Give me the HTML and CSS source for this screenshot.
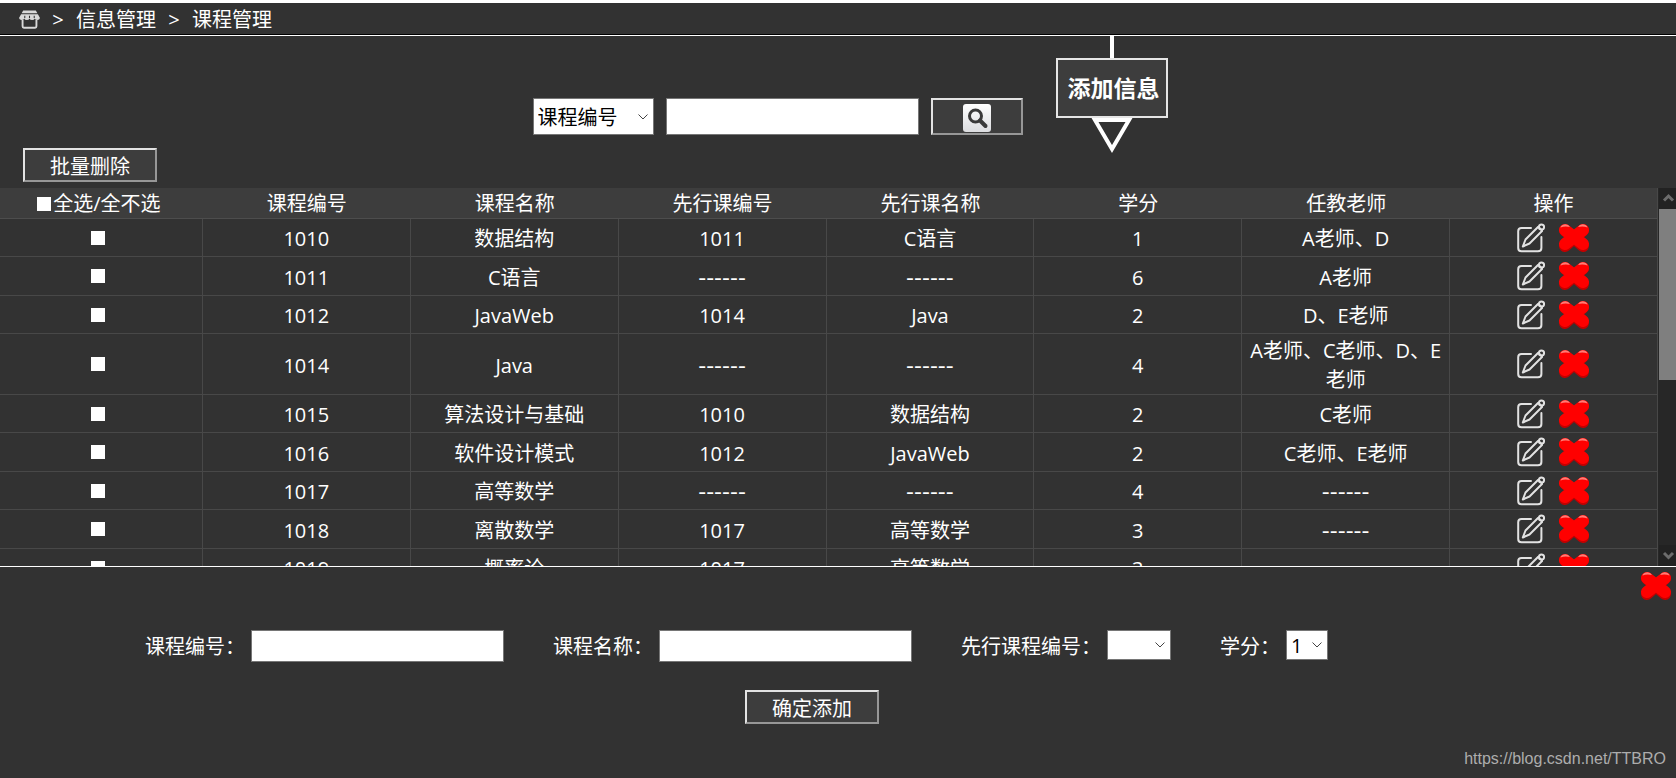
FILE: index.html
```html
<!DOCTYPE html>
<html lang="zh-CN">
<head>
<meta charset="utf-8">
<meta name="viewport" content="width=device-width, initial-scale=1">
<title>课程管理</title>
<link rel="stylesheet" href="styles.css">
</head>
<body>
<svg class="sprite" aria-hidden="true">
  <defs>
    <linearGradient id="tile" x1="0" y1="0" x2="0" y2="1">
      <stop offset="0" stop-color="#ffffff"/>
      <stop offset="1" stop-color="#dcdde0"/>
    </linearGradient>
  </defs>
  <symbol id="cross" viewBox="0 0 32 30">
    <g fill="none" stroke-linecap="round" stroke-width="12">
      <path stroke="#c40000" d="M7 7.500L25 23M25 7.500L7 23"/>
      <path stroke="#ff0000" d="M7 7L25 21M25 7L7 21"/>
    </g>
    <path fill="#ff7d76" d="M2.300 4.500Q4 1.300 7.500 1.300Q10.500 1.500 12 4Q7 2.800 2.300 4.500ZM20 4Q21.500 1.500 24.500 1.300Q28 1.300 29.700 4.500Q25 2.800 20 4Z"/>
  </symbol>
  <symbol id="edit" viewBox="0 0 28 30">
    <g fill="none" stroke="#e2e2e2" stroke-width="2" stroke-linecap="round" stroke-linejoin="round">
      <path d="M14 5H4.500Q1.200 5 1.200 8.300V25Q1.200 28.300 4.500 28.300H21Q24.400 28.300 24.400 25V14"/>
      <path d="M21 4L8.500 16.500L5.800 23.500L12.500 20.500L25 8"/>
      <path d="M21.500 4L25 7.500"/>
      <circle cx="24.500" cy="4" r="2.600"/>
    </g>
  </symbol>
</svg>

<nav class="crumbs" aria-label="位置">
  <a href="#" aria-label="首页"><svg class="home" viewBox="0 0 20 18">
    <path fill="#d8d8d8" d="M4 .5H16L17.500 3H2.500ZM2 4H18L20 7.500Q19.500 9.500 17.500 9.500Q15.500 9.500 15 8Q14.500 9.500 12.500 9.500Q10.500 9.500 10 8Q9.500 9.500 7.500 9.500Q5.500 9.500 5 8Q4.500 9.500 2.500 9.500Q.5 9.500 0 7.500Z"/>
    <path fill="#323232" d="M5 5.500h1v2H5zM9.500 5.500h1v2h-1zM14 5.500h1v2h-1z"/>
    <path fill="none" stroke="#d8d8d8" stroke-width="1.800" d="M3.400 9.500V15.500Q3.400 16.800 4.700 16.800H15.300Q16.600 16.800 16.600 15.500V9.500"/>
  </svg></a>
  <span class="sep">&gt;</span>
  <a href="#">信息管理</a>
  <span class="sep">&gt;</span>
  <a href="#">课程管理</a>
</nav>

<section class="toolbar">
  <form class="search">
    <select class="field key" aria-label="查询条件"><option>课程编号</option><option>课程名称</option></select>
    <input class="field text" type="text" aria-label="查询内容">
    <button class="btn go" type="button" aria-label="查询"><svg class="lens" viewBox="0 0 28 28">
      <rect width="28" height="28" rx="3" fill="url(#tile)"/>
      <circle cx="12.500" cy="12" r="6" fill="none" stroke="#3a3a3a" stroke-width="3"/>
      <path d="M17 16.500L22.500 22" stroke="#3a3a3a" stroke-width="4" stroke-linecap="round"/>
    </svg></button>
    <button class="sign" type="button">
      <span class="stem"></span>
      <span class="board">添加信息</span>
      <svg class="tip" viewBox="0 0 42 35"><path d="M4 2H38L21 31Z" fill="#323232" stroke="#fff" stroke-width="4"/></svg>
    </button>
  </form>
  <button class="btn wide" type="button">批量删除</button>
</section>

<main class="list">
  <div class="view">
    <table class="grid">
      <thead>
        <tr><th><label class="all"><input class="tick" type="checkbox">全选/全不选</label></th><th>课程编号</th><th>课程名称</th><th>先行课编号</th><th>先行课名称</th><th>学分</th><th>任教老师</th><th>操作</th></tr>
      </thead>
      <tbody>
        <tr><td><input class="tick" type="checkbox" aria-label="选择 1010"></td><td>1010</td><td>数据结构</td><td>1011</td><td>C语言</td><td>1</td><td>A老师、D</td><td><div class="ops"><button class="icon" type="button" aria-label="编辑"><svg class="pen"><use href="#edit"/></svg></button><button class="icon" type="button" aria-label="删除"><svg class="cross"><use href="#cross"/></svg></button></div></td></tr>
        <tr><td><input class="tick" type="checkbox" aria-label="选择 1011"></td><td>1011</td><td>C语言</td><td class="none">------</td><td class="none">------</td><td>6</td><td>A老师</td><td><div class="ops"><button class="icon" type="button" aria-label="编辑"><svg class="pen"><use href="#edit"/></svg></button><button class="icon" type="button" aria-label="删除"><svg class="cross"><use href="#cross"/></svg></button></div></td></tr>
        <tr><td><input class="tick" type="checkbox" aria-label="选择 1012"></td><td>1012</td><td>JavaWeb</td><td>1014</td><td>Java</td><td>2</td><td>D、E老师</td><td><div class="ops"><button class="icon" type="button" aria-label="编辑"><svg class="pen"><use href="#edit"/></svg></button><button class="icon" type="button" aria-label="删除"><svg class="cross"><use href="#cross"/></svg></button></div></td></tr>
        <tr><td><input class="tick" type="checkbox" aria-label="选择 1014"></td><td>1014</td><td>Java</td><td class="none">------</td><td class="none">------</td><td>4</td><td>A老师、C老师、D、E老师</td><td><div class="ops"><button class="icon" type="button" aria-label="编辑"><svg class="pen"><use href="#edit"/></svg></button><button class="icon" type="button" aria-label="删除"><svg class="cross"><use href="#cross"/></svg></button></div></td></tr>
        <tr><td><input class="tick" type="checkbox" aria-label="选择 1015"></td><td>1015</td><td>算法设计与基础</td><td>1010</td><td>数据结构</td><td>2</td><td>C老师</td><td><div class="ops"><button class="icon" type="button" aria-label="编辑"><svg class="pen"><use href="#edit"/></svg></button><button class="icon" type="button" aria-label="删除"><svg class="cross"><use href="#cross"/></svg></button></div></td></tr>
        <tr><td><input class="tick" type="checkbox" aria-label="选择 1016"></td><td>1016</td><td>软件设计模式</td><td>1012</td><td>JavaWeb</td><td>2</td><td>C老师、E老师</td><td><div class="ops"><button class="icon" type="button" aria-label="编辑"><svg class="pen"><use href="#edit"/></svg></button><button class="icon" type="button" aria-label="删除"><svg class="cross"><use href="#cross"/></svg></button></div></td></tr>
        <tr><td><input class="tick" type="checkbox" aria-label="选择 1017"></td><td>1017</td><td>高等数学</td><td class="none">------</td><td class="none">------</td><td>4</td><td class="none">------</td><td><div class="ops"><button class="icon" type="button" aria-label="编辑"><svg class="pen"><use href="#edit"/></svg></button><button class="icon" type="button" aria-label="删除"><svg class="cross"><use href="#cross"/></svg></button></div></td></tr>
        <tr><td><input class="tick" type="checkbox" aria-label="选择 1018"></td><td>1018</td><td>离散数学</td><td>1017</td><td>高等数学</td><td>3</td><td class="none">------</td><td><div class="ops"><button class="icon" type="button" aria-label="编辑"><svg class="pen"><use href="#edit"/></svg></button><button class="icon" type="button" aria-label="删除"><svg class="cross"><use href="#cross"/></svg></button></div></td></tr>
        <tr><td><input class="tick" type="checkbox" aria-label="选择 1019"></td><td>1019</td><td>概率论</td><td>1017</td><td>高等数学</td><td>3</td><td class="none">------</td><td><div class="ops"><button class="icon" type="button" aria-label="编辑"><svg class="pen"><use href="#edit"/></svg></button><button class="icon" type="button" aria-label="删除"><svg class="cross"><use href="#cross"/></svg></button></div></td></tr>
      </tbody>
    </table>
  </div>
  <div class="bar" aria-hidden="true">
    <svg class="arrow" viewBox="0 0 17 21"><path d="M5 12.500L9.500 8L14 12.500" fill="none" stroke="#6c6c6c" stroke-width="3"/></svg>
    <div class="track"><div class="thumb"></div></div>
    <svg class="arrow" viewBox="0 0 17 21"><path d="M5 8L9.500 12.500L14 8" fill="none" stroke="#6c6c6c" stroke-width="3"/></svg>
  </div>
</main>

<section class="panel">
  <button class="icon close" type="button" aria-label="关闭"><svg class="cross"><use href="#cross"/></svg></button>
  <form class="add">
    <div class="fields">
      <label class="pair">课程编号：<input class="field text" type="text"></label>
      <label class="pair">课程名称：<input class="field text" type="text"></label>
      <label class="pair">先行课程编号：<select class="field prior"><option></option></select></label>
      <label class="pair">学分：<select class="field credit"><option>1</option><option>2</option><option>3</option></select></label>
    </div>
    <button class="btn wide" type="button">确定添加</button>
  </form>
  <footer class="mark">https://blog.csdn.net/TTBRO</footer>
</section>
</body>
</html>
```
FILE: styles.css
```css
* { box-sizing: border-box; }

body {
  display: flex;
  flex-direction: column;
  height: 100vh;
  margin: 0;
  border-top: 3px solid #fff;
  background: #323232;
  color: #fff;
  font: 20px/30px "Open Sans", "Noto Sans CJK SC", sans-serif;
}

button, input, select { margin: 0; font: inherit; color: inherit; }
button { cursor: pointer; }
a { color: inherit; text-decoration: none; }
svg { display: block; }
.sprite { position: absolute; width: 0; height: 0; }

.crumbs {
  display: flex;
  align-items: center;
  height: 32px;
  padding: 2px 0 0 19px;
  border-bottom: 1px solid #000;
}
.home { width: 21px; height: 19px; }
.sep { width: 36px; text-align: center; }

.toolbar {
  padding-bottom: 6px;
  border-top: 1px solid #fff;
}
.search {
  display: flex;
  justify-content: center;
  align-items: flex-start;
  height: 112px;
  padding-left: 24px;
}
.search .field, .go { height: 37px; margin-top: 62px; }
.search .field { margin-right: 12px; }

.field {
  border: 1px solid #767676;
  border-radius: 0;
  background-color: #fff;
  color: #000;
}
.text { width: 253px; height: 32px; padding: 0 4px; }
select.field {
  appearance: none;
  padding: 2px 4px 0;
  background-image: url("data:image/svg+xml,%3Csvg xmlns='http://www.w3.org/2000/svg' width='10' height='6'%3E%3Cpath d='M.5.5L5 5L9.500.5' fill='none' stroke='%23444'/%3E%3C/svg%3E");
  background-repeat: no-repeat;
  background-position: right 5px center;
}
.key { width: 121px; }

.btn {
  padding: 0;
  border: 2px solid;
  border-color: #e3e3e3 #979797 #979797 #e3e3e3;
  background: #3d3d3d;
}
.go { width: 92px; }
.lens { width: 28px; height: 28px; margin: 3px auto 0; }
.wide { display: block; width: 134px; height: 34px; padding-top: 4px; line-height: 26px; }
.toolbar .wide { margin-left: 23px; }

.sign {
  display: flex;
  flex-direction: column;
  align-items: center;
  margin-left: 33px;
  padding: 0;
  border: 0;
  background: none;
}
.stem { width: 4px; height: 22px; background: #fff; }
.board {
  width: 112px;
  padding-left: 4px;
  border: 2px solid #e6e6e6;
  background: #3d3d3d;
  font-size: 23px;
  font-weight: 700;
  line-height: 56px;
}
.tip { width: 42px; height: 35px; }

.list { display: flex; flex: 1; min-height: 0; }
.view { flex: 1; overflow: hidden; }
.grid {
  width: calc(100% + 5px);
  margin-left: -5px;
  table-layout: fixed;
  border-spacing: 0;
  text-align: center;
  line-height: 29px;
}
th {
  height: 31px;
  padding: 1px 0 0;
  border-bottom: 1px solid #4d4d4d;
  background: #3d3d3d;
  font-weight: 400;
}
tbody tr { height: 38px; }
tbody tr:nth-child(even) { height: 39px; }
td {
  padding: 2px 4px 0;
  border-right: 1px solid #484848;
  border-bottom: 1px solid #484848;
}
td:first-child, td:last-child { padding-top: 0; }
th:last-child { border-right: 1px solid #484848; }
.none { font-family: "DejaVu Sans", sans-serif; font-size: 22px; }
.all { display: flex; justify-content: center; align-items: center; gap: 2px; }
.tick {
  display: block;
  appearance: none;
  width: 14px;
  height: 14px;
  margin: 0 auto;
  background: #fff;
}
.all .tick { margin: 0; }
.tick:checked { background: #4a90e2; }
.ops { display: flex; justify-content: center; gap: 13px; }
.icon { padding: 0; border: 0; background: none; }
.pen { width: 28px; height: 30px; }
.cross { width: 32px; height: 30px; }

.bar { display: flex; flex-direction: column; width: 18px; padding-left: 1px; background: #272727; }
.arrow { width: 17px; height: 21px; background: #222; }
.track { flex: 1; }
.thumb { height: 51%; background: #7f7f7f; }

.panel { position: relative; border-top: 1px solid #fff; }
.close { position: absolute; top: 4px; right: 4px; }
.add {
  display: flex;
  flex-direction: column;
  align-items: center;
  gap: 26px;
  padding: 63px 197px 0 145px;
}
.fields { display: flex; align-self: flex-start; gap: 49px; white-space: nowrap; }
.pair { display: flex; align-items: flex-start; gap: 6px; line-height: 34px; }
.pair select { line-height: 26px; }
.prior { width: 64px; height: 30px; }
.credit { width: 42px; height: 30px; }
.mark {
  padding: 24px 10px 8px;
  color: #adadad;
  font: 16px/22px "Liberation Sans", sans-serif;
  text-align: right;
}
```
